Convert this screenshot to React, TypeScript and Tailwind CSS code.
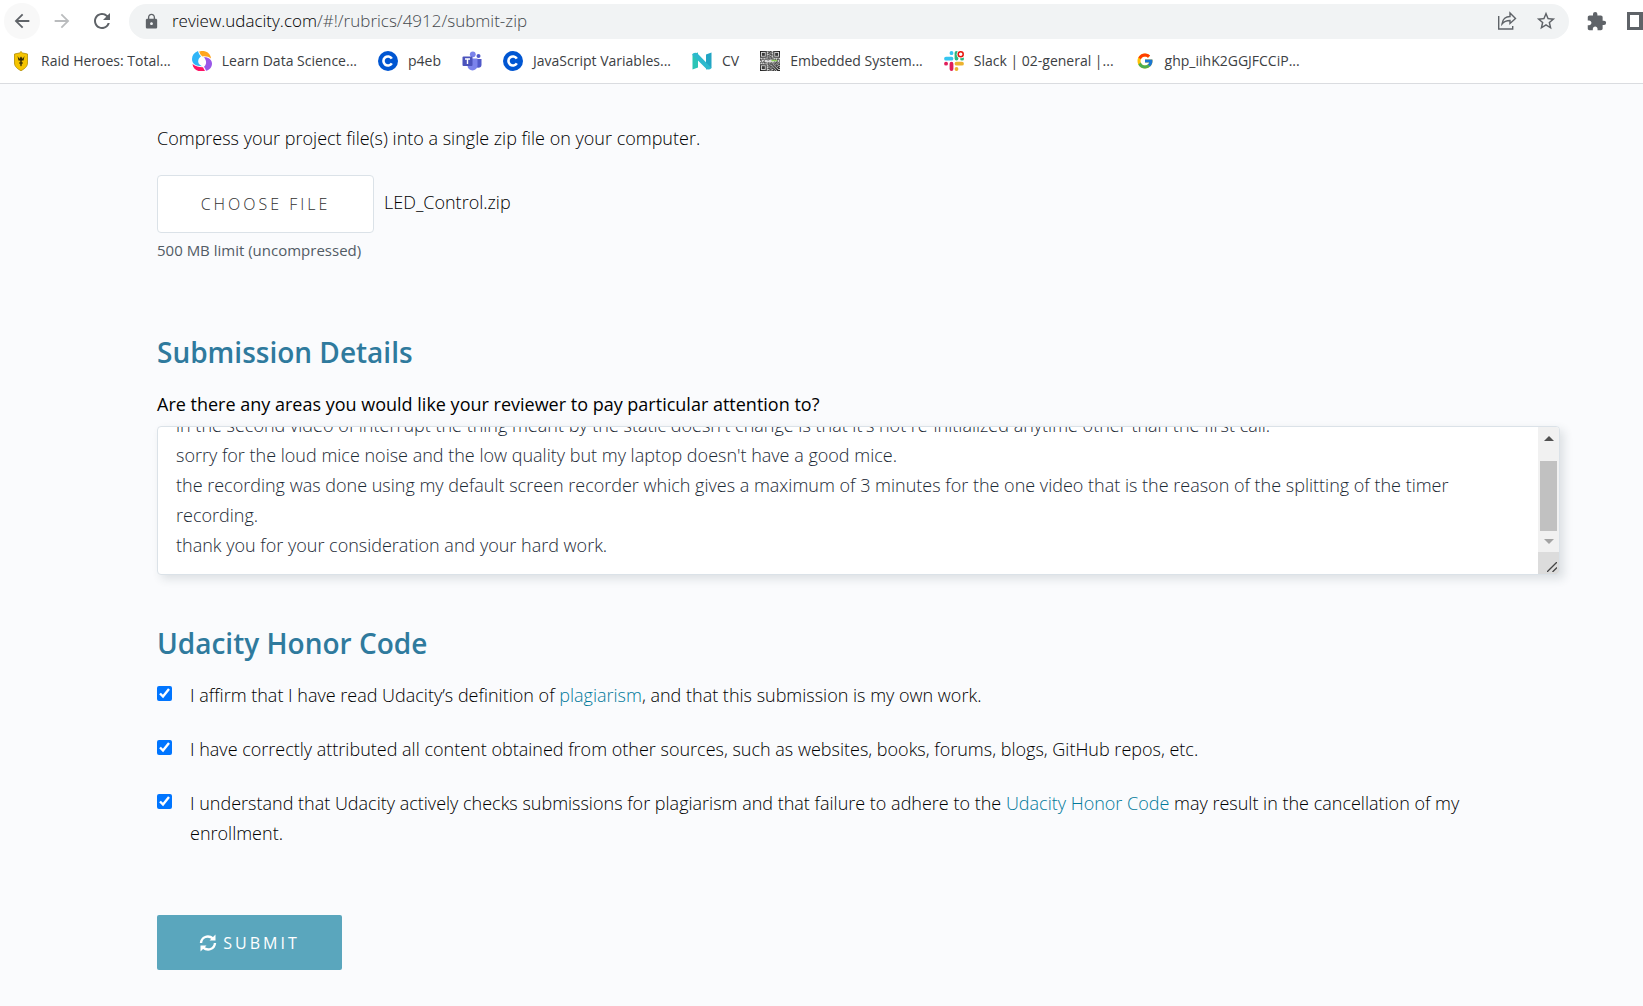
import { useLayoutEffect, useRef, useState, type ReactNode } from "react";
import { FcGoogle } from "react-icons/fc";
import { MdArrowBack, MdArrowForward, MdExtension, MdLock, MdRefresh, MdStarBorder } from "react-icons/md";

function ShieldIcon() {
  return (
    <svg viewBox="0 0 20 20" className="size-5" aria-hidden="true">
      <path d="M10 .5 11.6 2 16.5 3v9c0 3.5-3 6-6.500 7.700C6.500 18 3.500 15.500 3.500 12V3l4.900-1z" fill="#f5c400" stroke="#b08b00" strokeWidth=".8" />
      <path d="M6.500 5 8.500 8l.7-2.500L10 7l.8-1.500.7 2.500 2-3L12.500 9.500H10.700v5l-.7 1-.7-1v-5H7.500z" fill="#2d2607" />
      <path d="M8 12h4" stroke="#2d2607" strokeWidth="1" />
    </svg>
  );
}

function SwirlIcon() {
  return (
    <svg viewBox="0 0 20 20" className="size-5" aria-hidden="true">
      <path d="M6 0C2 1.500 0 4.500 0 8c0 5 4 7 10 7.200C6.500 13.500 5.500 11 6.500 8.500 7 7 8 6 9 5.200 7.500 4 6.500 2 6 0z" fill="#31b5f7" />
      <path d="M7.200 .5C12-1.200 18.500 1 19 7.500 16.500 5.500 13.500 5 10.500 5.500 9 4.500 7.800 2.800 7.200.5z" fill="#ffa51e" />
      <path d="M11.500 6.300C16 5.800 20 8.500 20 12.500c0 4-3 6.800-6 7.300-.5-1.500-1-2.800-2-4 2-1.800 2.500-4 1.800-6.300-.5-1.500-1.200-2.500-2.300-3.200z" fill="#9a57e8" />
      <path d="M.5 13c3 2.500 7 3.300 10.500 3.200l2 3.800C7 21.500 1 19 .5 13z" fill="#ff1464" />
    </svg>
  );
}

function CIcon() {
  return (
    <svg viewBox="0 0 20 20" className="size-5" aria-hidden="true">
      <circle cx="10" cy="10" r="10" fill="#0056d2" />
      <path d="M13.800 7.700a4.500 4.500 0 1 0 0 4.600" fill="none" stroke="#fff" strokeWidth="2.600" />
    </svg>
  );
}

function TeamsIcon() {
  return (
    <svg viewBox="0 0 20 20" className="size-5" aria-hidden="true">
      <circle cx="16.500" cy="5" r="2" fill="#5059c9" />
      <circle cx="10.800" cy="3.300" r="2.900" fill="#7b83eb" />
      <path d="M13 8h6.500v5.500a3.200 3.200 0 0 1-6.500 0z" fill="#5059c9" />
      <path d="M5.500 7.500h10v7a5 5 0 0 1-10 0z" fill="#7b83eb" />
      <rect x=".5" y="5.500" width="10" height="9.500" rx="1" fill="#4b53bc" />
      <path d="M3 8h5M5.500 8v5" stroke="#fff" strokeWidth="1.400" />
    </svg>
  );
}

function NIcon() {
  return (
    <svg viewBox="0 0 20 20" className="size-5" aria-hidden="true">
      <path d="M.5 3 6 1.500v15L.5 18.500z" fill="#2bc4b6" />
      <path d="M14 3.500 19.500 1.500V17L14 18.500z" fill="#22a5c4" />
      <path d="M.5 3Q4 .5 6.500 3.500L19.500 17Q16.500 20 13.500 17L.5 4z" fill="#2cb9cd" />
    </svg>
  );
}

const qrRows = [
  "111111101011001111111",
  "100000100110101000001",
  "101110101101001011101",
  "101110100011101011101",
  "101110101100101011101",
  "100000101011001000001",
  "111111101010101111111",
  "000000001101100000000",
  "101101110110111010110",
  "110010001000000110101",
  "000000000000000000000",
  "010110000000000101101",
  "101011101101101011010",
  "000000001011010110101",
  "111111101101110101011",
  "100000100110011011100",
  "101110101011101101011",
  "101110100101010110110",
  "101110101110111011011",
  "100000100011001101100",
  "111111101101011010111",
];

function QrIcon() {
  return (
    <svg viewBox="0 0 21 21" className="size-5" aria-hidden="true">
      <rect width="21" height="21" fill="#ddd" />
      {qrRows.map((row, y) =>
        row.split("").map((c, x) => (c === "1" ? <rect key={`${x}-${y}`} x={x} y={y} width="1" height="1" fill="#111" /> : null)),
      )}
      <path d="M12 10h6" stroke="#8fd05a" strokeWidth="1.500" />
    </svg>
  );
}

function SlackIcon() {
  return (
    <svg viewBox="0 0 20 20" className="size-5" fill="none" strokeWidth="3.800" strokeLinecap="round" aria-hidden="true">
      <path d="M2 7.700h5.500M7.500 2v.2" stroke="#36c5f0" />
      <path d="M12.500 2v5.500M18 7.700h.1" stroke="#2eb67d" />
      <path d="M12.500 12.700H18M12.500 18v.1" stroke="#ecb22e" />
      <path d="M7.500 12.700V18M2 12.700h.1" stroke="#e01e5a" />
      <circle cx="16.700" cy="3.300" r="4" fill="#fff" stroke="none" />
      <circle cx="16.700" cy="3.300" r="2.500" stroke="#e8160c" strokeWidth="1.500" />
    </svg>
  );
}

function ShareIcon() {
  return (
    <svg viewBox="0 0 20 20" className="size-5" fill="none" stroke="#5f6368" strokeWidth="1.400" aria-hidden="true">
      <path d="M1.700 5v13h14v-3" />
      <path d="M5 13c.5-5 4-7.500 8-7.500V2l5.500 5.500L13 12.500V9.500c-3.500 0-6 1-8 3.500z" />
    </svg>
  );
}

function SyncIcon() {
  return (
    <svg viewBox="0 0 18 18" className="size-[18px]" aria-hidden="true">
      <g fill="none" stroke="#fff" strokeWidth="2.400">
        <path d="M2 9C2.500 3 9 .5 14 4.500" />
        <path d="M16 9c-.5 6-7 8.500-12 4.500" />
      </g>
      <path d="M16.500 .5v6h-6zM1.500 17.500v-6h6z" fill="#fff" />
    </svg>
  );
}

const bookmarks: { label: string; name: string; icon: ReactNode }[] = [
  { label: "Raid Heroes: Total...", name: "Raid Heroes", icon: <ShieldIcon /> },
  { label: "Learn Data Science...", name: "Learn Data Science", icon: <SwirlIcon /> },
  { label: "p4eb", name: "p4eb", icon: <CIcon /> },
  { label: "", name: "Teams", icon: <TeamsIcon /> },
  { label: "JavaScript Variables...", name: "JavaScript Variables", icon: <CIcon /> },
  { label: "CV", name: "CV", icon: <NIcon /> },
  { label: "Embedded System...", name: "Embedded System", icon: <QrIcon /> },
  { label: "Slack | 02-general |...", name: "Slack", icon: <SlackIcon /> },
  { label: "ghp_iihK2GGJFCCiP...", name: "Google search", icon: <FcGoogle className="size-[18px]" /> },
];

function BrowserBar() {
  return (
    <header className="overflow-hidden border-b border-[#dadce0] bg-white text-[#3c4043]">
      <div className="flex h-[42px] items-center pl-1">
        <button aria-label="Back" className="flex size-9 shrink-0 items-center justify-center rounded-full bg-[#f8f8f8] text-[#5f6368]">
          <MdArrowBack className="size-[22px]" />
        </button>
        <button aria-label="Forward" className="ml-1 flex size-9 shrink-0 items-center justify-center text-[#babcbe]">
          <MdArrowForward className="size-[22px]" />
        </button>
        <button aria-label="Reload" className="ml-1 flex size-9 shrink-0 items-center justify-center text-[#5f6368]">
          <MdRefresh className="size-6" />
        </button>
        <div className="ml-[9px] flex h-[35px] min-w-0 flex-1 items-center rounded-full bg-[#f1f3f4] px-[14px]">
          <MdLock className="size-[17px] shrink-0 text-[#5f6368]" />
          <p className="ml-3 flex-1 truncate text-[17px] font-light text-[#45494d]">
            <span className="text-black">review.udacity.com</span>/#!/rubrics/4912/submit-zip
          </p>
          <button aria-label="Share" className="mr-[18px]"><ShareIcon /></button>
          <button aria-label="Bookmark this page" className="-mr-[2px] text-[#5f6368]"><MdStarBorder className="size-[22px]" /></button>
        </div>
        <button aria-label="Extensions" className="ml-[17px] shrink-0 text-[#5f6368]">
          <MdExtension className="size-[21px]" />
        </button>
        <button aria-label="Side panel" className="-mr-1 ml-5 flex h-[18px] w-5 shrink-0 border-[3px] border-r-8 border-[#5f6368]" />
      </div>
      <nav aria-label="Bookmarks" className="flex h-[41px] items-center gap-[21px] pb-1 pl-[11px] text-sm whitespace-nowrap">
        {bookmarks.map((b) => (
          <a key={b.name} href="#" aria-label={b.name} className="flex items-center gap-[10px]">
            <span className="flex size-5 items-center justify-center">{b.icon}</span>
            {b.label && <span>{b.label}</span>}
          </a>
        ))}
      </nav>
    </header>
  );
}

const notes = `in the second video of interrupt the thing meant by the static doesn't change is that it's not re-initialized anytime other than the first call.
sorry for the loud mice noise and the low quality but my laptop doesn't have a good mice.
the recording was done using my default screen recorder which gives a maximum of 3 minutes for the one video that is the reason of the splitting of the timer recording.
thank you for your consideration and your hard work.`;

function NotesField() {
  const ref = useRef<HTMLTextAreaElement>(null);
  useLayoutEffect(() => {
    if (ref.current) ref.current.scrollTop = ref.current.scrollHeight;
  }, []);
  return (
    <div className="flex h-[149px] overflow-hidden rounded-sm border border-[#dbe2e8] bg-white shadow-[4px_4px_10px_rgba(46,61,73,0.14)]">
      <textarea
        id="notes"
        ref={ref}
        defaultValue={notes}
        className="h-full min-w-0 flex-1 resize-none overflow-hidden py-[14px] pr-10 pl-[18px] leading-[30px] font-light text-[#1c2a36] outline-none"
      />
      <div aria-hidden="true" className="flex w-[21px] flex-col bg-[#f1f1f1]">
        <div className="flex h-[34px] justify-center pt-[9px]">
          <svg viewBox="0 0 10 5" className="h-[5px] w-[10px]"><path d="M0 5 5 0l5 5z" fill="#505050" /></svg>
        </div>
        <div className="mx-[2px] h-[70px] bg-[#c1c1c1]" />
        <div className="flex flex-1 justify-center pt-2">
          <svg viewBox="0 0 10 5" className="h-[5px] w-[10px]"><path d="M0 0 5 5l5-5z" fill="#a3a3a3" /></svg>
        </div>
        <div className="flex h-[22px] items-end justify-end bg-[#dcdcdc] p-[2px]">
          <svg viewBox="0 0 10 10" className="size-[10px]" stroke="#444" strokeWidth="1.300"><path d="M0 10 10 0M5.500 10 10 5.500" /></svg>
        </div>
      </div>
    </div>
  );
}

function Pledge({ id, children }: { id: string; children: ReactNode }) {
  const [checked, setChecked] = useState(true);
  return (
    <div className="flex items-start">
      <input
        id={id}
        type="checkbox"
        checked={checked}
        onChange={(e) => setChecked(e.target.checked)}
        className="mt-[6px] size-[15px] shrink-0 accent-[#0075ff]"
      />
      <label htmlFor={id} className="ml-[18px] pr-5">{children}</label>
    </div>
  );
}

export default function App() {
  return (
    <div className="min-h-screen bg-[#fafbfd] font-['Open_Sans','Noto_Sans',sans-serif]">
      <BrowserBar />
      <main className="pt-[39px] pr-[83px] pb-9 pl-[157px] text-lg leading-[30px] font-light text-black">
        <p>Compress your project file(s) into a single zip file on your computer.</p>
        <div className="mt-[22px] flex items-center">
          <button className="h-[58px] w-[217px] rounded-sm border border-[#dbe2e8] bg-white text-base font-light tracking-[3px] text-[#303030]">
            CHOOSE FILE
          </button>
          <span className="ml-[10px] pb-1">LED_Control.zip</span>
        </div>
        <p className="mt-[5px] text-[15px] leading-6 font-normal text-[#525c65]">500 MB limit (uncompressed)</p>

        <h2 className="mt-[70px] text-[28px] leading-10 font-semibold text-[#2f7a9d]">Submission Details</h2>
        <label htmlFor="notes" className="mt-[17px] mb-[7px] block font-medium text-black">
          Are there any areas you would like your reviewer to pay particular attention to?
        </label>
        <NotesField />

        <h2 className="mt-[48px] text-[28px] leading-10 font-semibold text-[#2f7a9d]">Udacity Honor Code</h2>
        <div className="mt-[17px] flex flex-col gap-6">
          <Pledge id="own-work">
            I affirm that I have read Udacity’s definition of <a href="#" className="text-[#017a9b]">plagiarism</a>, and that this submission is my own work.
          </Pledge>
          <Pledge id="attributed">
            I have correctly attributed all content obtained from other sources, such as websites, books, forums, blogs, GitHub repos, etc.
          </Pledge>
          <Pledge id="honor-code">
            I understand that Udacity actively checks submissions for plagiarism and that failure to adhere to the{" "}
            <a href="#" className="text-[#017a9b]">Udacity Honor Code</a> may result in the cancellation of my enrollment.
          </Pledge>
        </div>
        <button className="mt-[67px] flex h-[55px] w-[185px] items-center justify-center gap-[6px] rounded-xs bg-[#5aa6bd] text-base font-normal tracking-[3px] text-white">
          <SyncIcon />
          SUBMIT
        </button>
      </main>
    </div>
  );
}
